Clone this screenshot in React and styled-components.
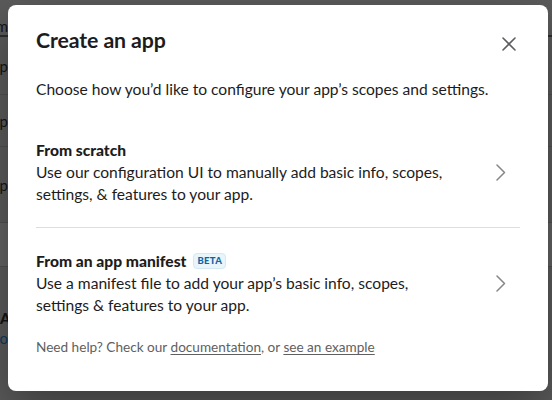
import React from 'react';
import styled, { createGlobalStyle } from 'styled-components';

const GlobalStyle = createGlobalStyle`
    html, body {
        margin: 0;
        padding: 0;
        background: #5b5b5b;
    }
    body {
        font-family: Lato, "Noto Sans", "Liberation Sans", sans-serif;
        -webkit-font-smoothing: antialiased;
    }
`

const Page = styled.div`
    position: relative;
    width: 552px;
    height: 400px;
    overflow: hidden;
    background: #5b5b5b;
`

// dimmed page behind the dialog
const Backdrop = styled.div`
    display: flex;
    flex-direction: column;
`
const BackRow = styled.div`
    height: ${props => props.h}px;
    display: flex;
    flex-direction: column;
    justify-content: ${props => props.align || 'center'};
    gap: 2px;
    background: ${props => props.light ? '#636363' : 'transparent'};
    border-bottom: ${props => props.line || '1px solid #505050'};
    box-sizing: border-box;
`
const BackCell = styled.div`
    width: 8px;
    overflow: hidden;
    display: flex;
    justify-content: ${props => props.start ? 'flex-start' : 'flex-end'};
    white-space: nowrap;
    font-size: 15px;
    line-height: 18px;
    font-weight: ${props => props.bold ? 900 : 400};
    color: ${props => props.color || '#151515'};
`

const Modal = styled.div`
    position: absolute;
    left: 8px;
    top: 5px;
    width: 540px;
    height: 386px;
    box-sizing: border-box;
    background: #fff;
    border-radius: 8px;
    box-shadow: 0 18px 48px rgba(0, 0, 0, 0.35);
    display: flex;
    flex-direction: column;
    color: #1d1c1d;
`
const Header = styled.div`
    display: flex;
    justify-content: space-between;
    align-items: flex-start;
    padding: 21px 28px 0;
`
const Title = styled.h1`
    margin: 0;
    font-size: 21.3px;
    line-height: 28px;
    font-weight: 700;
    letter-spacing: -0.1px;
`
const CloseButton = styled.button`
    width: 36px;
    height: 36px;
    margin-right: -7px;
    border: none;
    background: transparent;
    padding: 0;
    display: flex;
    align-items: center;
    justify-content: center;
    color: #5e5d60;
    cursor: pointer;
`
const Body = styled.div`
    padding: 0 28px;
    display: flex;
    flex-direction: column;
`
const Intro = styled.p`
    margin: 16px 0 17px;
    font-size: 15.6px;
    line-height: 22px;
`
const Option = styled.div`
    display: flex;
    align-items: center;
    padding: 22px 0;
    border-bottom: ${props => props.divider ? '1px solid #dddddd' : 'none'};
    cursor: pointer;
`
const OptionText = styled.div`
    width: 420px;
    font-size: 15.6px;
    line-height: 22px;
`
const OptionTitle = styled.div`
    display: flex;
    align-items: center;
    font-weight: 900;
`
const Badge = styled.span`
    margin-left: 7px;
    height: 16px;
    padding: 0 3px;
    display: inline-flex;
    align-items: center;
    border-radius: 4px;
    background: #e8f5fa;
    border: 1px solid #d4e9f4;
    box-sizing: border-box;
    color: #1264a3;
    font-size: 9.5px;
    font-weight: 900;
    letter-spacing: 0.3px;
`
const Chevron = styled.svg`
    margin-left: auto;
    margin-right: 14px;
    flex: none;
`
const Footer = styled.p`
    margin: 0;
    padding: 0 28px;
    font-size: 13.6px;
    line-height: 18px;
    color: #616061;
`
const Link = styled.a`
    color: #616061;
    text-decoration: underline;
    text-underline-offset: 2px;
`

const ChevronIcon = () => (
    <Chevron width="10" height="17" viewBox="0 0 10 17" fill="none">
        <path d="M1 1l7.5 7.5L1 16" stroke="#868686" strokeWidth="1.5" strokeLinecap="round" strokeLinejoin="round" />
    </Chevron>
)

const options = [
    {
        title: 'From scratch',
        desc: 'Use our configuration UI to manually add basic info, scopes, settings, & features to your app.',
    },
    {
        title: 'From an app manifest',
        beta: true,
        desc: 'Use a manifest file to add your app\u2019s basic info, scopes, settings & features to your app.',
    },
];

const App = () => {
    return (
        <Page>
            <GlobalStyle />
            <Backdrop>
                <BackRow h={37} line="2px solid #2e2e2e" align="flex-start">
                    <BackCell style={{ marginTop: 17 }}>Form</BackCell>
                </BackRow>
                <BackRow h={58}><BackCell>App</BackCell></BackRow>
                <BackRow h={52}><BackCell>App</BackCell></BackRow>
                <BackRow h={76}><BackCell>App</BackCell></BackRow>
                <BackRow h={44} light />
                <BackRow h={133} align="flex-start" line="none">
                    <div style={{ height: 40 }} />
                    <BackCell bold start>Apps</BackCell>
                    <BackCell color="#0e3b5e">Do</BackCell>
                </BackRow>
            </Backdrop>

            <Modal>
                <Header>
                    <Title>Create an app</Title>
                    <CloseButton aria-label="Close">
                        <svg width="14" height="14" viewBox="0 0 14 14">
                            <path d="M1 1l12 12M13 1L1 13" stroke="currentColor" strokeWidth="1.6" strokeLinecap="round" />
                        </svg>
                    </CloseButton>
                </Header>
                <Body>
                    <Intro>Choose how you’d like to configure your app’s scopes and settings.</Intro>
                    {options.map((o, i) => (
                        <Option key={o.title} divider={i === 0}>
                            <OptionText>
                                <OptionTitle>
                                    {o.title}
                                    {o.beta && <Badge>BETA</Badge>}
                                </OptionTitle>
                                {o.desc}
                            </OptionText>
                            <ChevronIcon />
                        </Option>
                    ))}
                </Body>
                <Footer>
                    Need help? Check our <Link href="#">documentation</Link>, or <Link href="#">see an example</Link>
                </Footer>
            </Modal>
        </Page>
    );
};

export default App;
